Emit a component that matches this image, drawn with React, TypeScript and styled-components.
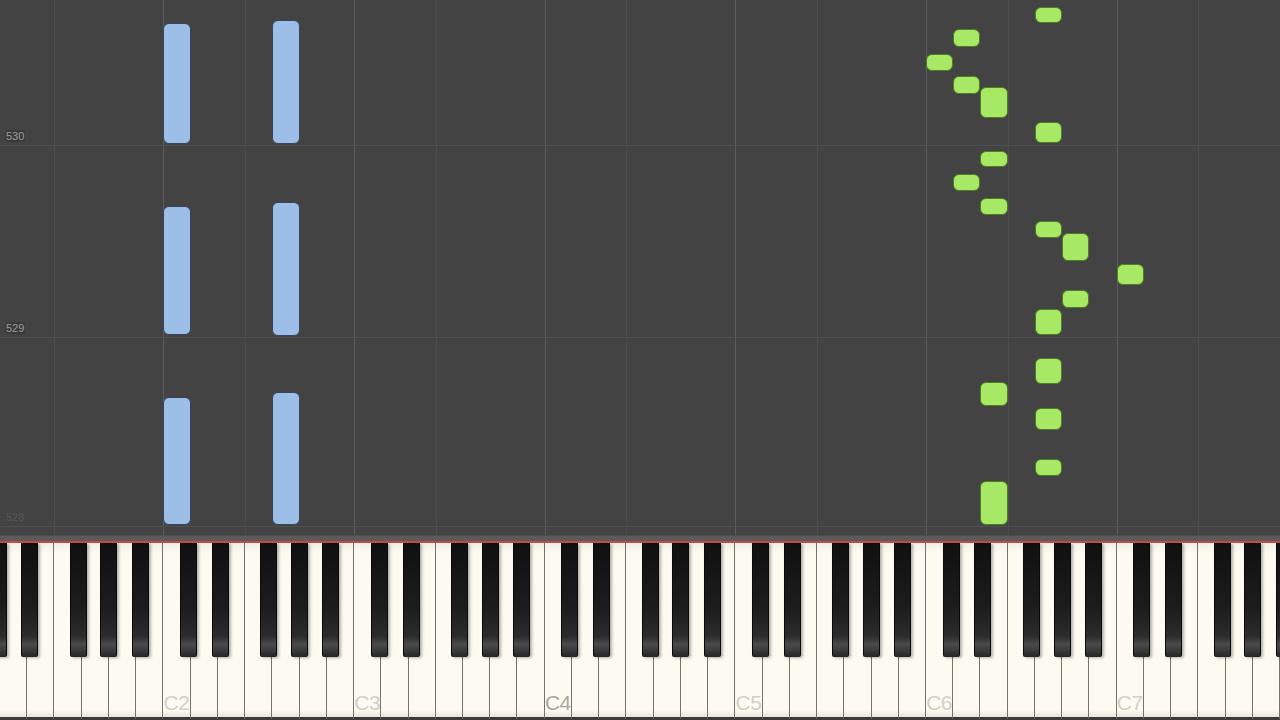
import styled, { createGlobalStyle } from 'styled-components';

const GlobalStyle = createGlobalStyle`
  html, body {
    margin: 0;
    padding: 0;
    background: #424242;
    overflow: hidden;
  }
`;

const KEY_COUNT = 47;
const KW = 1280 / KEY_COUNT;
const LETTERS = ['D', 'E', 'F', 'G', 'A', 'B', 'C'];

// shift of each black key's centre from the edge of the white key before it
const BLACK_OFFSET: Record<string, number> = { C: -2, D: 2.5, F: -3.5, G: 0, A: 4 };

// [white key index, top, bottom]
const blueNotes: [number, number, number][] = [
  [6, 23, 144], [6, 206, 335], [6, 397, 525],
  [10, 20, 144], [10, 202, 336], [10, 392, 525],
];

const greenNotes: [number, number, number][] = [
  [38, 7, 23], [35, 29, 47], [34, 54, 71], [35, 76, 94], [36, 87, 118],
  [38, 122, 143], [36, 151, 167], [35, 174, 191], [36, 198, 215],
  [38, 221, 238], [39, 233, 261], [41, 264, 285], [39, 290, 308],
  [38, 309, 335], [38, 358, 384], [36, 382, 406], [38, 408, 430],
  [38, 459, 476], [36, 481, 525],
];

const measures = [
  { label: '530', height: 146 },
  { label: '529', height: 192 },
  { label: '528', height: 189, faded: true },
];

const Screen = styled.div`
  width: 1280px;
  height: 720px;
  display: flex;
  flex-direction: column;
  background: #424242;
  font-family: 'Liberation Sans', Arial, sans-serif;
`;

const Roll = styled.div`
  display: grid;
  height: 535px;
  background: #434343;
  overflow: hidden;

  & > * {
    grid-area: 1 / 1;
  }
`;

const Columns = styled.div`
  display: flex;
`;

const Column = styled.div<{ $line: 'c' | 'f' | 'none' }>`
  flex: 1;
  box-sizing: border-box;
  border-left: 1px solid
    ${p => (p.$line === 'c' ? '#5c5c5c' : p.$line === 'f' ? '#4d4d4d' : 'transparent')};
`;

const Measures = styled.div`
  display: flex;
  flex-direction: column;
`;

const Measure = styled.div<{ $h: number }>`
  height: ${p => p.$h}px;
  box-sizing: border-box;
  border-bottom: 1px solid #505050;
  display: flex;
  align-items: flex-end;
  padding: 0 0 3px 5px;
`;

const BarLabel = styled.span<{ $faded?: boolean }>`
  padding: 0 1px;
  font-size: 11px;
  line-height: 12px;
  color: ${p => (p.$faded ? '#565656' : '#9c9c9c')};
  background: ${p => (p.$faded ? 'transparent' : 'rgba(0,0,0,0.12)')};
  border-radius: 2px;
`;

const NoteLayer = styled.div`
  position: relative;
`;

const Note = styled.div<{ $hand: 'left' | 'right' }>`
  position: absolute;
  box-sizing: border-box;
  border-radius: 6px;
  background: ${p => (p.$hand === 'left' ? '#9dbee6' : '#a7e864')};
  border: 1px solid ${p => (p.$hand === 'left' ? '#34465e' : '#4f7f22')};
`;

const Band = styled.div`
  height: 6px;
  background: #5b5b5b;
  border-top: 1px solid #4e4e4e;
  box-sizing: border-box;
`;

const RedLine = styled.div`
  height: 2px;
  background: #c44a4a;
`;

const Keyboard = styled.div`
  position: relative;
  flex: 1;
  display: flex;
  background: #2a2a2a;
  overflow: hidden;
`;

const WhiteKey = styled.div`
  flex: 1;
  box-sizing: border-box;
  border-right: 1.5px solid #75736c;
  border-bottom: 3px solid #3a3a3a;
  background: linear-gradient(to bottom, #f2efe4 0%, #fdfbf1 6%, #fdfbf1 96%, #e8e5da 100%);
  display: flex;
  align-items: flex-end;
  justify-content: center;
  padding-bottom: 3px;
`;

const KeyLabel = styled.span<{ $dark?: boolean }>`
  font-size: 21px;
  line-height: 22px;
  color: ${p => (p.$dark ? '#a9a79f' : '#d2d0c6')};
  letter-spacing: -0.5px;
`;

const BlackKey = styled.div`
  position: absolute;
  top: 0;
  width: 17px;
  height: 114px;
  box-sizing: border-box;
  border-radius: 0 0 2px 2px;
  background: linear-gradient(
    to bottom,
    #101010 0%,
    #1c1c1c 55%,
    #2c2c2c 82%,
    #3e3e3e 86%,
    #4a4a4a 89%,
    #3a3a3a 94%,
    #262626 100%
  );
  border-left: 1px solid #0a0a0a;
  border-right: 1px solid #0a0a0a;
  box-shadow: 2px 1px 3px rgba(0, 0, 0, 0.3);
`;

function App() {
  const whites = Array.from({ length: KEY_COUNT }, (_, i) => ({
    letter: LETTERS[i % 7],
    octave: 1 + Math.floor((i + 1) / 7),
    i,
  }));

  const blacks: number[] = [-2 - 8.5];
  whites.forEach(({ letter, i }) => {
    const off = BLACK_OFFSET[letter];
    if (off !== undefined) blacks.push((i + 1) * KW + off - 8.5);
  });

  const notes = [
    ...blueNotes.map(n => ({ n, hand: 'left' as const })),
    ...greenNotes.map(n => ({ n, hand: 'right' as const })),
  ];

  return (
    <Screen>
      <GlobalStyle />
      <Roll>
        <Columns>
          {whites.map(({ letter, i }) => (
            <Column key={i} $line={letter === 'C' ? 'c' : letter === 'F' ? 'f' : 'none'} />
          ))}
        </Columns>
        <Measures>
          {measures.map(m => (
            <Measure key={m.label} $h={m.height}>
              <BarLabel $faded={m.faded}>{m.label}</BarLabel>
            </Measure>
          ))}
        </Measures>
        <NoteLayer>
          {notes.map(({ n: [k, t, b], hand }, idx) => (
            <Note
              key={idx}
              $hand={hand}
              style={{ left: k * KW, width: KW, top: t, height: b - t }}
            />
          ))}
        </NoteLayer>
      </Roll>
      <Band />
      <RedLine />
      <Keyboard>
        {whites.map(({ letter, octave, i }) => (
          <WhiteKey key={i}>
            {letter === 'C' && <KeyLabel $dark={octave === 4}>C{octave}</KeyLabel>}
          </WhiteKey>
        ))}
        {blacks.map((x, n) => (
          <BlackKey key={n} style={{ left: x }} />
        ))}
      </Keyboard>
    </Screen>
  );
}

export default App;
